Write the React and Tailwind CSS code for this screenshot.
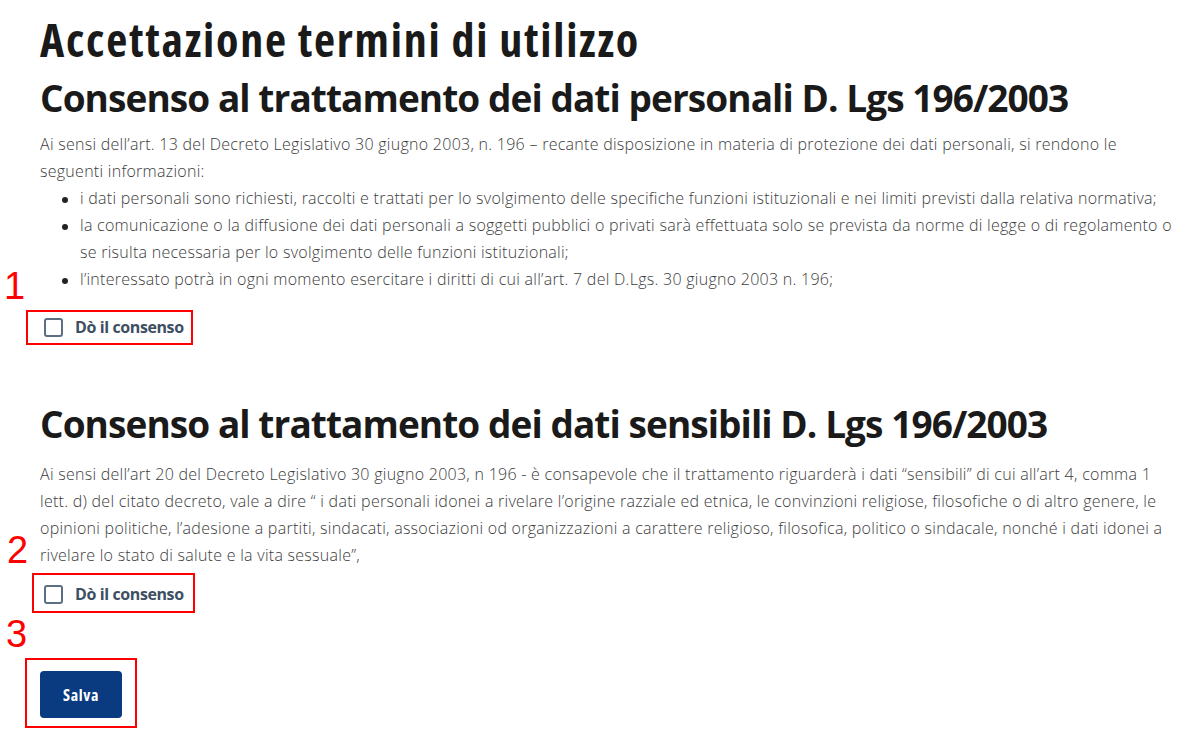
import React from "react";

function Bullet({ children }) {
  return (
    <li className="flex">
      <span className="mt-[12px] ml-[22px] mr-[12px] h-[6px] w-[6px] shrink-0 rounded-full bg-[#222]" />
      <span>{children}</span>
    </li>
  );
}

function Consent({ className }) {
  return (
    <label className={`flex h-[19px] items-center gap-[12px] pl-[4px] ${className}`}>
      <span className="h-[19px] w-[19px] rounded-[3px] border-2 border-[#5c6f82] bg-white" />
      <span className="text-[16px] font-bold leading-[19px] tracking-[-0.4px] text-[#3d4f62] [font-stretch:100%]">
        Dò il consenso
      </span>
    </label>
  );
}

export default function App() {
  return (
    <div className="relative min-h-[740px] bg-white font-['Open_Sans',sans-serif]">
      <div className="pl-[40px] pr-[20px] pt-[13px]">
        <h1 className="whitespace-nowrap text-[46px] font-bold leading-[52px] tracking-[1.75px] text-[#1a1a1a] [font-stretch:75%]">
          Accettazione termini di utilizzo
        </h1>
        <h2 className="mt-[11px] whitespace-nowrap text-[37px] font-bold leading-[44px] tracking-[-0.93px] text-[#1a1a1a] [font-stretch:100%]">
          Consenso al trattamento dei dati personali D. Lgs 196/2003
        </h2>
        <div className="mt-[11px] whitespace-nowrap text-[16px] font-light leading-[27px] tracking-[0.27px] text-[#3c3c3c] [font-stretch:100%]">
          <p>
            Ai sensi dell’art. 13 del Decreto Legislativo 30 giugno 2003, n. 196 – recante disposizione in materia di protezione dei dati personali, si rendono le
            <br />
            seguenti informazioni:
          </p>
          <ul>
            <Bullet>
              i dati personali sono richiesti, raccolti e trattati per lo svolgimento delle specifiche funzioni istituzionali e nei limiti previsti dalla relativa normativa;
            </Bullet>
            <Bullet>
              la comunicazione o la diffusione dei dati personali a soggetti pubblici o privati sarà effettuata solo se prevista da norme di legge o di regolamento o
              <br />
              se risulta necessaria per lo svolgimento delle funzioni istituzionali;
            </Bullet>
            <Bullet>
              l’interessato potrà in ogni momento esercitare i diritti di cui all’art. 7 del D.Lgs. 30 giugno 2003 n. 196;
            </Bullet>
          </ul>
        </div>
        <Consent className="mt-[25px]" />

        <h2 className="mt-[65px] whitespace-nowrap text-[37px] font-bold leading-[44px] tracking-[-0.93px] text-[#1a1a1a] [font-stretch:100%]">
          Consenso al trattamento dei dati sensibili D. Lgs 196/2003
        </h2>
        <p className="mt-[15px] whitespace-nowrap text-[16px] font-light leading-[27px] tracking-[0.27px] text-[#3c3c3c] [font-stretch:100%]">
          Ai sensi dell’art 20 del Decreto Legislativo 30 giugno 2003, n 196 - è consapevole che il trattamento riguarderà i dati “sensibili” di cui all’art 4, comma 1
          <br />
          lett. d) del citato decreto, vale a dire “ i dati personali idonei a rivelare l’origine razziale ed etnica, le convinzioni religiose, filosofiche o di altro genere, le
          <br />
          opinioni politiche, l’adesione a partiti, sindacati, associazioni od organizzazioni a carattere religioso, filosofica, politico o sindacale, nonché i dati idonei a
          <br />
          rivelare lo stato di salute e la vita sessuale”,
        </p>
        <Consent className="mt-[16px]" />

        <button className="mt-[67px] flex h-[47px] w-[82px] items-center justify-center rounded-[4px] bg-[#0a3a7f] text-[16px] font-bold tracking-[0.6px] text-white [font-stretch:75%]">
          Salva
        </button>
      </div>

      {/* annotation overlays */}
      <span className="absolute left-[4px] top-[267px] font-['Liberation_Sans',Arial,sans-serif] text-[38px] leading-[38px] text-[#ff0000]">1</span>
      <div className="absolute left-[26px] top-[310px] h-[35px] w-[167px] border-2 border-[#ff0000]" />
      <span className="absolute left-[7px] top-[531px] font-['Liberation_Sans',Arial,sans-serif] text-[38px] leading-[38px] text-[#ff0000]">2</span>
      <div className="absolute left-[32px] top-[573px] h-[40px] w-[163px] border-2 border-[#ff0000]" />
      <span className="absolute left-[6px] top-[615px] font-['Liberation_Sans',Arial,sans-serif] text-[38px] leading-[38px] text-[#ff0000]">3</span>
      <div className="absolute left-[25px] top-[658px] h-[70px] w-[112px] border-2 border-[#ff0000]" />
    </div>
  );
}
